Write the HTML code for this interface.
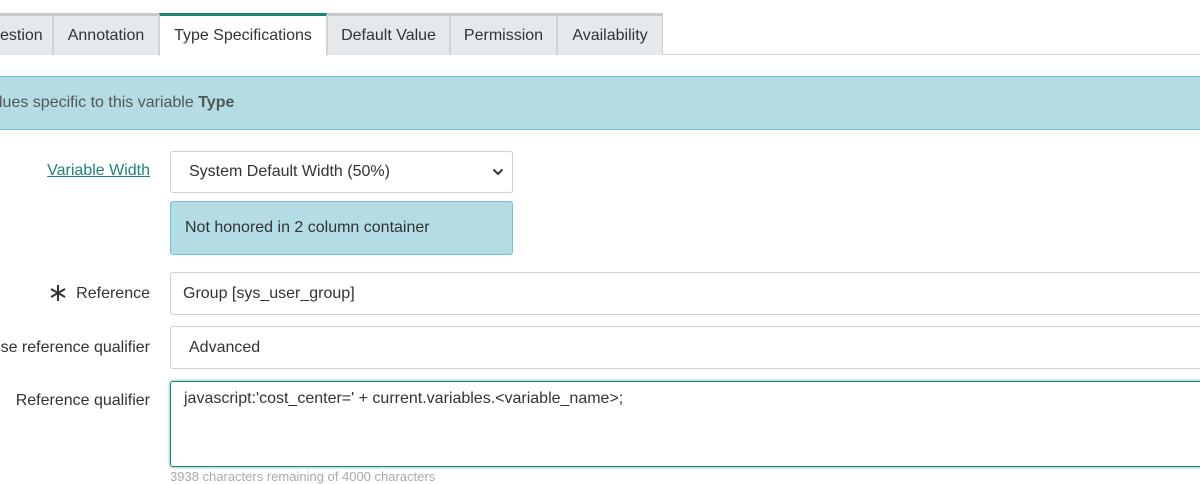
<!DOCTYPE html>
<html><head><style>
*{box-sizing:border-box;margin:0;padding:0}
body{width:1200px;height:484px;overflow:hidden;background:#fff;font-family:"Liberation Sans",sans-serif;font-size:16px;color:#333;position:relative}
.abs{position:absolute}
.tab{position:absolute;top:13px;height:42px;background:#e6e9ec;border:1px solid #cfd3d6;border-top:3px solid #c8c8c8;border-bottom:none;line-height:40px;text-align:center;color:#333;font-size:16px;white-space:nowrap}
.lbl{position:absolute;right:1050px;text-align:right;white-space:nowrap}
.box{position:absolute;border:1px solid #cfcfcf;border-radius:3px;background:#fff;padding-left:18px;white-space:nowrap}
</style></head><body>
<div class="abs" style="left:0;top:54px;width:1200px;height:1px;background:#cfd3d6"></div>
<div class="tab" style="left:-1px;width:54px;text-align:right;padding-right:12px;overflow:hidden">estion</div>
<div class="tab" style="left:53px;width:106px">Annotation</div>
<div class="tab" style="left:159px;width:168px;background:#fff;border-top:3px solid #1f8476;height:43px">Type Specifications</div>
<div class="tab" style="left:327px;width:123px">Default Value</div>
<div class="tab" style="left:450px;width:107px">Permission</div>
<div class="tab" style="left:557px;width:106px">Availability</div>

<div class="abs" style="left:-2px;top:76px;width:1204px;height:54px;background:#b4dce4;border:1px solid #72c2d3;line-height:52px;color:#555">lues specific to this variable <b>Type</b></div>

<div class="lbl" style="top:162px;color:#1f8476;text-decoration:underline">Variable Width</div>
<div class="box" style="left:170px;top:151px;width:343px;height:42px;line-height:40px">System Default Width (50%)
<svg class="abs" style="left:321px;top:16px" width="12" height="8" viewBox="0 0 12 8"><path d="M1.5 1.5 L6 6 L10.5 1.5" fill="none" stroke="#333" stroke-width="2"/></svg></div>
<div class="box" style="left:170px;top:201px;width:343px;height:54px;line-height:52px;background:#b4dce4;border-color:#72c2d3;padding-left:14px">Not honored in 2 column container</div>

<svg class="abs" style="left:49px;top:284px" width="18" height="18" viewBox="0 0 18 18"><g stroke="#333" stroke-width="2"><path d="M9 1V17"/><path d="M2 5L16 13"/><path d="M16 5L2 13"/></g></svg>
<div class="lbl" style="top:285px">Reference</div>
<div class="box" style="left:170px;top:272px;width:1040px;height:43px;line-height:41px;padding-left:12px">Group [sys_user_group]</div>

<div class="lbl" style="top:339px">se reference qualifier</div>
<div class="box" style="left:170px;top:326px;width:1040px;height:43px;line-height:41px">Advanced</div>

<div class="lbl" style="top:392px">Reference qualifier</div>
<div class="box" style="left:170px;top:381px;width:1040px;height:86px;border:1px solid #1f8476;box-shadow:0 0 3px #4aa89a;padding-left:13px;padding-top:4px;line-height:26px">javascript:'cost_center=' + current.variables.&lt;variable_name&gt;;</div>
<div class="abs" style="left:170px;top:469px;font-size:13px;color:#aaa">3938 characters remaining of 4000 characters</div>
</body></html>
